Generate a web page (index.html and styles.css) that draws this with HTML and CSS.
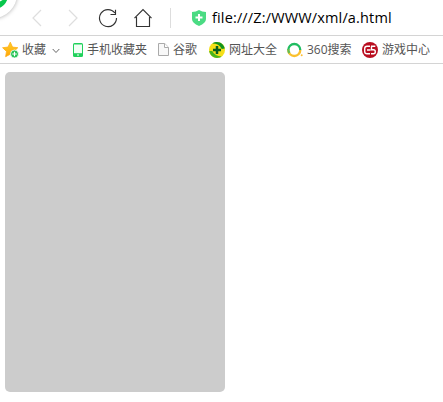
FILE: index.html
```html
<!DOCTYPE html>
<html lang="zh-CN">
<head>
<meta charset="utf-8">
<title>a.html</title>
<link rel="stylesheet" href="styles.css">
</head>
<body>
<header class="toolbar">
  <div class="logo"><svg width="20" height="20" viewBox="0 0 20 20"><circle cx="-6" cy="-5" r="14" fill="#08c74c"/><path d="M-1 1L4-2" stroke="#fff" stroke-width="2"/></svg></div>
  <svg class="back" width="10" height="18" viewBox="0 0 10 18"><path d="M9 1L1 9l8 8" fill="none" stroke="#dedede" stroke-width="1.2"/></svg>
  <svg class="forward" width="10" height="18" viewBox="0 0 10 18"><path d="M1 1l8 8-8 8" fill="none" stroke="#dedede" stroke-width="1.2"/></svg>
  <svg class="reload" width="20" height="20" viewBox="0 0 20 20"><path d="M16.8 5A8.5 8.5 0 1 0 18.5 10M17.5 1.7v4.8h-5" fill="none" stroke="#333" stroke-width="1.15"/></svg>
  <svg class="home" width="20" height="20" viewBox="0 0 20 20"><path d="M1.5 10.2L10 1.5l8.5 8.7M3.5 9v9.5h13V9" fill="none" stroke="#333" stroke-width="1.15"/></svg>
  <span class="divider"></span>
  <svg class="shield" width="14" height="16" viewBox="0 0 14 16"><path d="M0 2Q4 2 7 0q3 2 7 2v7q0 4-7 7-7-3-7-7z" fill="#4bdb83"/><path d="M7 4v7M3.5 7.5h7" stroke="#fff" stroke-width="2"/></svg>
  <span class="address">file:///Z:/WWW/xml/a.html</span>
</header>
<nav class="bookmarks">
  <a class="bookmark favorites">
    <svg width="18" height="18" viewBox="0 0 18 18"><defs><linearGradient id="gold" x2="0" y2="1"><stop stop-color="#ffd02a"/><stop offset="1" stop-color="#ffa408"/></linearGradient></defs><path d="M8.3 1.2l2.2 4.9 5.3.6-3.9 3.7 1 5.3-4.6-2.5-4.7 2.5.9-5.3L.6 6.7l5.4-.6z" fill="url(#gold)" stroke="#ffae16" stroke-width=".8" stroke-linejoin="round"/><circle cx="12.5" cy="13" r="4" fill="#1fc251" stroke="#fff" stroke-width=".8"/><path d="M12.5 10.7v4.6M10.2 13h4.6" stroke="#fff" stroke-width="1.2"/></svg>
    <span>收藏</span>
    <svg class="chevron" width="8" height="6" viewBox="0 0 8 6"><path d="M.7 1L4 4.5 7.3 1" fill="none" stroke="#666"/></svg>
  </a>
  <a class="bookmark mobile">
    <svg width="10" height="14" viewBox="0 0 10 14"><rect width="10" height="14" rx="1.5" fill="#20d15b"/><path d="M1 1.5h8v8.7H1z" fill="#f1fff5"/><path d="M4 12h2" stroke="#fff" stroke-width="1.2"/></svg>
    <span>手机收藏夹</span>
  </a>
  <a class="bookmark google">
    <svg width="11" height="13" viewBox="0 0 11 13"><path d="M.5.5h6.2l3.8 3.8v8.2H.5z" fill="#f8f8f8" stroke="#aaa"/><path d="M6.5.5v4h4" fill="#fff" stroke="#aaa"/></svg>
    <span>谷歌</span>
  </a>
  <a class="bookmark sites">
    <svg width="16" height="16" viewBox="0 0 16 16"><circle cx="8" cy="8" r="8" fill="#f5df18"/><path d="M3.2 1.6A8 8 0 0 1 15.8 6.5L12.7 7Q10 1.5 3.2 1.6z" fill="#12941e"/><path d="M.2 9A8 8 0 0 0 12.8 14.4Q6 14.5 3.3 9z" fill="#48b51c"/><path d="M8 4v8M4 8h8" stroke="#075f1c" stroke-width="2.5"/></svg>
    <span>网址大全</span>
  </a>
  <a class="bookmark search">
    <svg width="16" height="16" viewBox="0 0 16 16"><path d="M1.3 8a6 6 0 0 1 12 0" fill="none" stroke="#20bd62" stroke-width="2.3"/><path d="M1.3 8a6 6 0 0 0 12 0" fill="none" stroke="#fac02d" stroke-width="2.3"/><path d="M1.35 7A6 6 0 0 0 2.5 11" fill="none" stroke="#65bd55" stroke-width="2.3"/><circle cx="14.7" cy="13.3" r="1" fill="#ffbd32"/></svg>
    <span>360搜索</span>
  </a>
  <a class="bookmark games">
    <svg width="16" height="16" viewBox="0 0 16 16"><circle cx="8" cy="8" r="8" fill="#b90e20"/><path d="M8 4.2H5Q2.7 4.2 2.7 6.5v3q0 2.3 2.3 2.3h3M5 8h3.5M9 4.2h4.3M9.5 4.2v3.6h2q1.8 0 1.8 2t-1.8 2H9" fill="none" stroke="#fff" stroke-width="1.4"/></svg>
    <span>游戏中心</span>
  </a>
</nav>
<main class="page"><div class="panel"></div></main>
</body>
</html>
```
FILE: styles.css
```css
* { box-sizing: border-box; }
body { margin: 0; background: #fff; overflow: hidden; }
svg { display: block; flex: none; }
.toolbar { height: 36px; display: flex; align-items: center; border-bottom: 1px solid #d4d4d4; }
.logo { width: 20px; height: 35px; margin-right: 12px; position: relative; }
.logo::before { content: ""; position: absolute; left: -31px; top: -30px; width: 48px; height: 48px; border-radius: 50%; background: #fff; box-shadow: 0 0 4px #aaa; }
.logo svg { position: relative; }
.forward { margin-left: 26px; }
.reload { margin-left: 20px; }
.home { margin-left: 15px; }
.divider { width: 1px; height: 20px; margin-left: 17px; background: #ddd; }
.shield { margin-left: 21px; }
.address { margin-left: 6px; font: 14.5px/20px "Open Sans", "Noto Sans", sans-serif; letter-spacing: .15px; color: #000; white-space: nowrap; }
.bookmarks { height: 28px; display: flex; align-items: center; padding-left: 2px; border-bottom: 1px solid #d4d4d4; }
.bookmark { display: flex; align-items: center; gap: 4px; flex: none; color: #555; font: 12px/18px "Open Sans", "Noto Sans CJK SC", sans-serif; white-space: nowrap; }
.favorites { gap: 2px; width: 71px; }
.chevron { margin: 3px 0 0 4px; }
.mobile { width: 85px; }
.google { width: 51px; }
.sites { width: 78px; }
.search { width: 75px; }
.page { padding: 8px 5px; }
.panel { width: 220px; height: 320px; border-radius: 5px; background: #ccc; }
```
